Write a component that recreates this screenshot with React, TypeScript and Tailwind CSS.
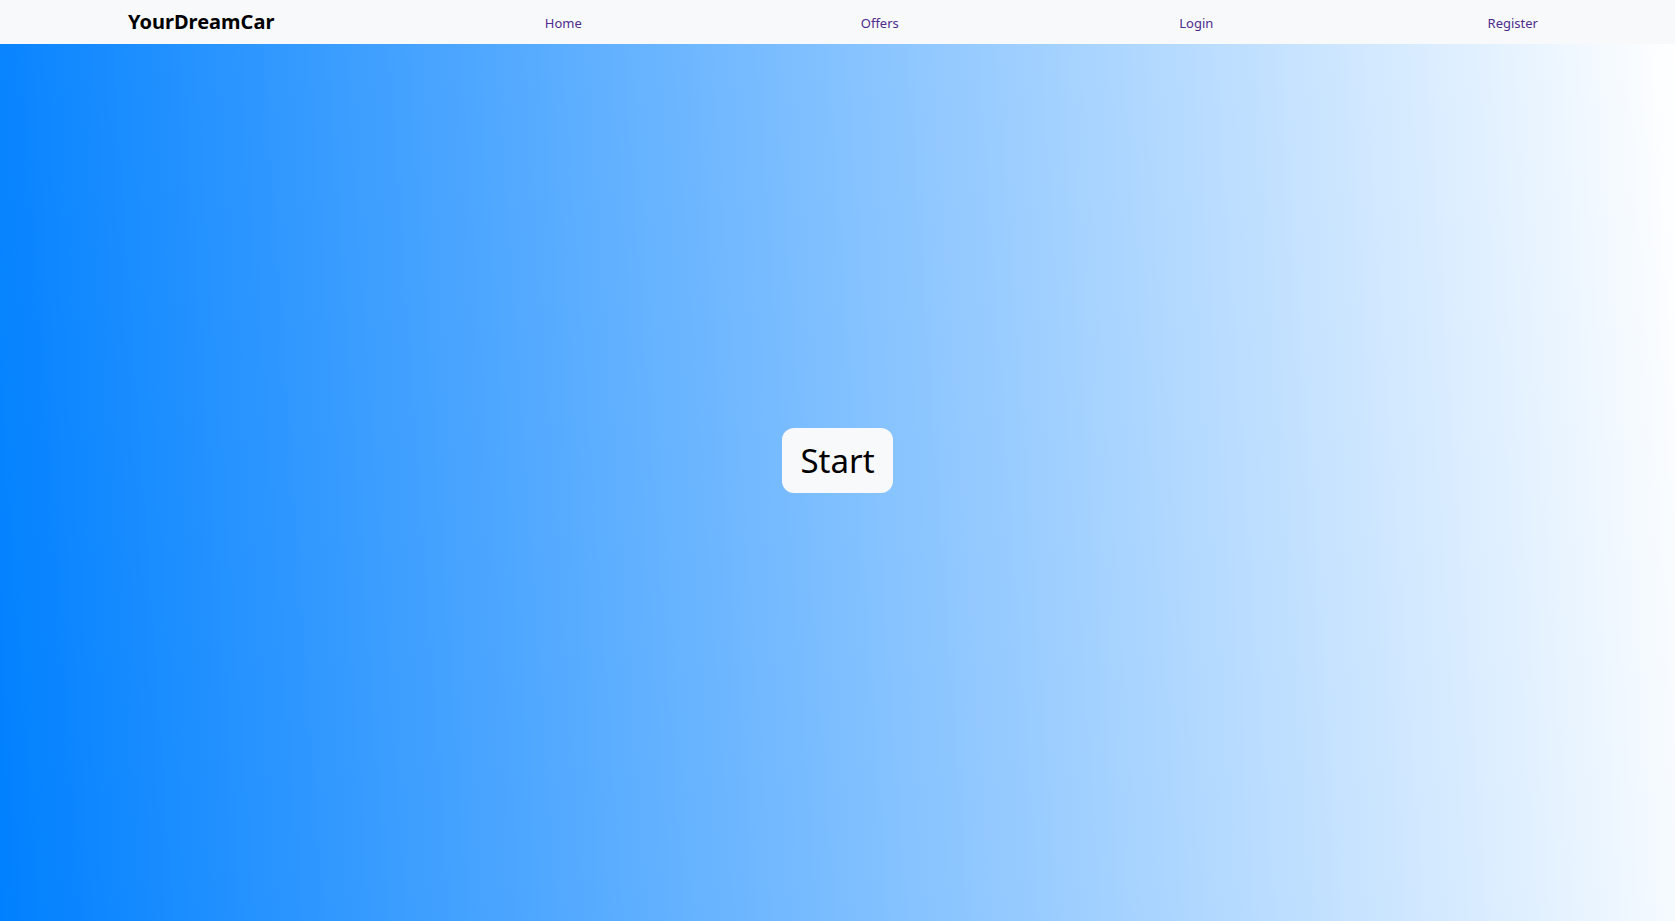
import React from "react";

const links = ["Home", "Offers", "Login", "Register"];

export default function App() {
    return (
        <div
            className="relative h-screen w-full bg-[linear-gradient(86deg,#0080ff,#ffffff)]"
            style={{ fontFamily: '"Noto Sans", "Open Sans", sans-serif' }}
        >
            <nav className="absolute top-0 left-0 right-0 h-[44px] bg-[#f8f9fa] flex items-center">
                <div className="w-[405px] pl-[128px] shrink-0">
                    <span className="text-[20px] font-bold text-black">YourDreamCar</span>
                </div>
                <ul className="flex-1 grid grid-cols-4 text-center pr-[4px]">
                    {links.map((l) => (
                        <li key={l}>
                            <a href="#" className="text-[13px] text-[#4e2b8f]">{l}</a>
                        </li>
                    ))}
                </ul>
            </nav>
            <main className="h-full flex items-center justify-center">
                <button className="bg-[#f8f9fa] rounded-[12px] h-[65px] px-[18px] text-[33px] text-black leading-none">
                    Start
                </button>
            </main>
        </div>
    );
}
